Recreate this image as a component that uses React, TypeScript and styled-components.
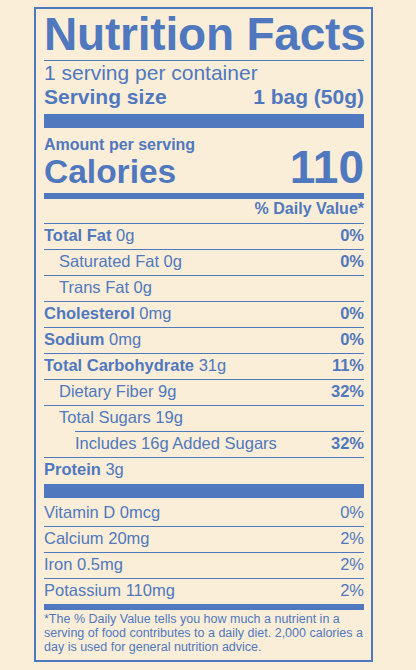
import React from "react";
import styled, { createGlobalStyle } from "styled-components";

const blue = "#4f78be";
const cream = "#fbeed8";

const GlobalStyle = createGlobalStyle`
  html, body {
    margin: 0;
    background: ${cream};
  }
  body {
    font-family: "Liberation Sans", Arial, Helvetica, sans-serif;
    color: ${blue};
  }
`;

const Label = styled.section`
  margin: 7px 0 0 34px;
  width: 320px;
  padding: 0 7px 0 8px;
  border: 2px solid ${blue};
  color: ${blue};
`;

const Title = styled.h1`
  margin: 0;
  padding: 2px 0 3px;
  font-size: 46px;
  line-height: 46px;
  font-weight: 700;
  letter-spacing: -0.2px;
  white-space: nowrap;
  border-bottom: 1px solid ${blue};
`;

const ServingLine = styled.div<{ $bold?: boolean }>`
  display: flex;
  justify-content: space-between;
  font-size: 21px;
  line-height: 24px;
  font-weight: ${(p) => (p.$bold ? 700 : 400)};
`;

const Bar = styled.div<{ $h: number; $mt?: number }>`
  height: ${(p) => p.$h}px;
  margin-top: ${(p) => p.$mt ?? 0}px;
  background: ${blue};
`;

const Amount = styled.div`
  padding-top: 9px;
  font-size: 16px;
  line-height: 16px;
  font-weight: 700;
`;

const CaloriesRow = styled.div`
  display: flex;
  justify-content: space-between;
  align-items: baseline;
  margin-top: -1px;
  font-weight: 700;
  line-height: 30px;
`;

const CaloriesLabel = styled.span`
  font-size: 33.5px;
`;

const CaloriesValue = styled.span`
  font-size: 46px;
`;

const DVHeader = styled.div`
  text-align: right;
  font-size: 16px;
  line-height: 20px;
  font-weight: 700;
  padding-bottom: 4px;
`;

const Section = styled.div<{ $pt?: number }>`
  padding-top: ${(p) => p.$pt ?? 0}px;
`;

const Row = styled.div<{ $indent?: number; $inset?: number; $hideLine?: boolean }>`
  display: flex;
  justify-content: space-between;
  border-top: 1px solid ${blue};
  margin-left: ${(p) => p.$inset ?? 0}px;
  padding-left: ${(p) => p.$indent ?? 0}px;
  padding-bottom: 2px;
  font-size: 16.5px;
  line-height: 23px;

  &:first-child {
    border-top-color: ${(p) => (p.$hideLine ? "transparent" : blue)};
  }
`;

const Name = styled.span``;

const Strong = styled.b`
  font-weight: 700;
`;

const Percent = styled.span<{ $bold?: boolean }>`
  font-weight: ${(p) => (p.$bold ? 700 : 400)};
`;

const Footnote = styled.p`
  margin: 0;
  padding: 2px 0 5px;
  font-size: 12.5px;
  line-height: 14.2px;
`;

const FootLine = styled.span`
  display: block;
  white-space: nowrap;
`;

type Nutrient = {
  bold?: string;
  name?: string;
  amount: string;
  dv?: string;
  indent?: number;
  inset?: number;
};

const nutrients: Nutrient[] = [
  { bold: "Total Fat", amount: "0g", dv: "0%" },
  { name: "Saturated Fat", amount: "0g", dv: "0%", indent: 15 },
  { name: "Trans Fat", amount: "0g", indent: 15 },
  { bold: "Cholesterol", amount: "0mg", dv: "0%" },
  { bold: "Sodium", amount: "0mg", dv: "0%" },
  { bold: "Total Carbohydrate", amount: "31g", dv: "11%" },
  { name: "Dietary Fiber", amount: "9g", dv: "32%", indent: 15 },
  { name: "Total Sugars", amount: "19g", indent: 15 },
  { name: "Includes 16g Added Sugars", amount: "", dv: "32%", inset: 31 },
  { bold: "Protein", amount: "3g" },
];

const vitamins = [
  { name: "Vitamin D", amount: "0mcg", dv: "0%" },
  { name: "Calcium", amount: "20mg", dv: "2%" },
  { name: "Iron", amount: "0.5mg", dv: "2%" },
  { name: "Potassium", amount: "110mg", dv: "2%" },
];

export default function App() {
  return (
    <>
      <GlobalStyle />
      <Label>
        <Title>Nutrition Facts</Title>
        <ServingLine>1 serving per container</ServingLine>
        <ServingLine $bold>
          <span>Serving size</span>
          <span>1 bag (50g)</span>
        </ServingLine>
        <Bar $h={14} $mt={5} />

        <Amount>Amount per serving</Amount>
        <CaloriesRow>
          <CaloriesLabel>Calories</CaloriesLabel>
          <CaloriesValue>110</CaloriesValue>
        </CaloriesRow>
        <Bar $h={6} $mt={6} />

        <DVHeader>% Daily Value*</DVHeader>
        <Section>
          {nutrients.map((n, i) => (
            <Row key={i} $indent={n.indent} $inset={n.inset}>
              <Name>
                {n.bold && <Strong>{n.bold}</Strong>}
                {n.name}
                {n.amount && ` ${n.amount}`}
              </Name>
              {n.dv && <Percent $bold>{n.dv}</Percent>}
            </Row>
          ))}
        </Section>
        <Bar $h={14} $mt={1} />

        <Section $pt={2}>
          {vitamins.map((v, i) => (
            <Row key={i} $hideLine>
              <Name>
                {v.name} {v.amount}
              </Name>
              <Percent>{v.dv}</Percent>
            </Row>
          ))}
        </Section>
        <Bar $h={6} />

        <Footnote>
          <FootLine>*The % Daily Value tells you how much a nutrient in a</FootLine>
          <FootLine>serving of food contributes to a daily diet. 2,000 calories a</FootLine>
          <FootLine>day is used for general nutrition advice.</FootLine>
        </Footnote>
      </Label>
    </>
  );
}
